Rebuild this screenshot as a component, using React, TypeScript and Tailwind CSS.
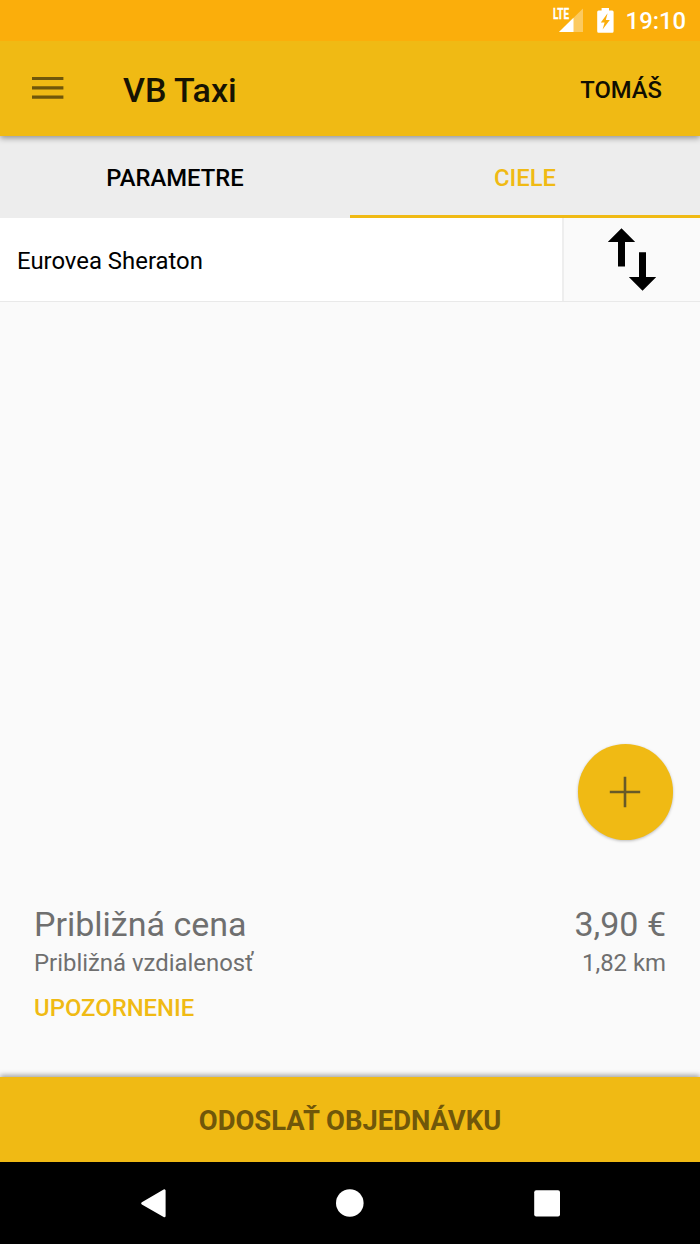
import React from 'react';

const StatusBar = () => (
  <div className="relative z-20 flex h-[41px] items-center justify-end bg-[#fbae0b] pr-[14px] text-white">
    <svg className="mr-[14px] h-[41px] w-[31px]" viewBox="552 0 31 41" aria-hidden="true">
      <path d="M559 32L583 8.5V32Z" fill="#fff" fillOpacity="0.35" />
      <path d="M559 32L573.5 17.8V32Z" fill="#fff" />
      <path d="M552 6H569.5V20.5H552Z" fill="#fbae0b" />
      <text
        x="553"
        y="19"
        fill="#fff"
        stroke="#fff"
        strokeWidth="0.3"
        fontSize="14.5"
        fontWeight="700"
        textLength="16"
        lengthAdjust="spacingAndGlyphs"
      >
        LTE
      </text>
    </svg>
    <svg className="mr-[12px] h-[41px] w-[17px]" viewBox="597 0 17 41" aria-hidden="true">
      <path
        d="M601.6 8H609V10.5H612.2Q613.6 10.5 613.6 12V31.3Q613.6 32.8 612.2 32.8H598.6Q597.2 32.8 597.2 31.3V12Q597.2 10.5 598.6 10.5H601.6Z"
        fill="#fff"
      />
      <path d="M607.6 13.2L600.8 22.4H604.6L602.6 29.6L609.8 19.9H605.8Z" fill="#fbae0b" />
    </svg>
    <span className="relative top-[1px] text-[23.8px] leading-none font-medium">19:10</span>
  </div>
);

const Toolbar = () => (
  <header className="relative z-10 flex h-[95px] items-center bg-[#f0ba14] pr-[38px] pl-8 shadow-[0_2px_6px_rgba(0,0,0,0.4)]">
    <button className="w-[91px]" aria-label="Menu">
      <svg className="h-[24px] w-[32px]" viewBox="0 0 32 24" aria-hidden="true" fill="#70570a">
        <path d="M0 0H31.4V3.1H0ZM0 9.3H31.4V12.4H0ZM0 18.6H31.4V21.7H0Z" />
      </svg>
    </button>
    <h1 className="flex-1 pt-[2px] text-[34px] leading-none font-medium text-[#171302]">VB Taxi</h1>
    <span className="pt-[4px] text-[23.8px] leading-none font-medium text-[#110e02]">TOMÁŠ</span>
  </header>
);

const Tabs = () => (
  <nav className="grid h-[82px] grid-cols-2 bg-[#ededed] text-[23.8px] leading-none font-medium">
    <button className="border-b-[3px] border-transparent pt-[6px] text-black">PARAMETRE</button>
    <button className="border-b-[3px] border-[#f0ba14] pt-[6px] text-[#f0ba14]">CIELE</button>
  </nav>
);

const Destination = () => (
  <div className="flex h-[84px] border-b border-[#e9e9e9]">
    <div className="flex flex-1 items-center bg-white pt-[5px] pl-[17px] text-[23.9px] leading-none text-black">
      Eurovea Sheraton
    </div>
    <button
      className="flex w-[138px] items-center justify-center border-l-2 border-[#eeeeee]"
      aria-label="Swap"
    >
      <svg className="h-[63px] w-[48px]" viewBox="0 0 48 63" aria-hidden="true">
        <path d="M13.5 0.3L27.2 14H17V38.5H10V14H-0.2Z" />
        <path d="M34.5 62.8L48.2 49.1H38V24.2H31V49.1H20.8Z" />
      </svg>
    </button>
  </div>
);

const Summary = () => (
  <section className="flex h-[209px] flex-col pt-[36px] pr-[34px] pl-[34px] text-[#6f6f6f]">
    <div className="flex justify-between text-[34px] leading-10">
      <span>Približná cena</span>
      <span>3,90 €</span>
    </div>
    <div className="flex justify-between pt-[3px] text-[23.9px] leading-8">
      <span>Približná vzdialenosť</span>
      <span>1,82 km</span>
    </div>
    <button className="self-start pt-[13px] text-[23.9px] leading-8 font-medium text-[#f0ba14]">
      UPOZORNENIE
    </button>
  </section>
);

const NavigationBar = () => (
  <div className="flex h-[82px] items-center bg-black pl-[140px]">
    <svg className="h-[30px] w-[420px]" viewBox="140 1188 420 30" aria-hidden="true" fill="#fff">
      <path
        d="M142.5 1203.3L164.3 1190.6V1216Z"
        stroke="#fff"
        strokeWidth="2.6"
        strokeLinejoin="round"
      />
      <circle cx="349.8" cy="1203" r="13.8" />
      <rect x="534.2" y="1190.3" width="25.8" height="26.3" rx="2" />
    </svg>
  </div>
);

const App = () => {
  return (
    <div className="flex h-[1244px] w-[700px] flex-col overflow-hidden bg-[#fafafa] font-[Roboto,sans-serif]">
      <StatusBar />
      <Toolbar />
      <Tabs />
      <Destination />
      <main className="flex flex-1 items-end justify-end pr-[27px] pb-[28px]">
        <button
          className="flex size-[95.5px] items-center justify-center rounded-full bg-[#f0ba14] shadow-[0_1px_3px_rgba(0,0,0,0.25)]"
          aria-label="Add"
        >
          <svg className="size-[32px]" viewBox="0 0 32 32" aria-hidden="true">
            <path d="M16 0.8V31.2M0.8 16H31.2" stroke="#685a28" strokeWidth="2.6" />
          </svg>
        </button>
      </main>
      <Summary />
      <button className="relative h-[85.5px] shrink-0 bg-[#f0ba14] pt-[5px] text-[27.4px] leading-none font-bold text-[#70570a] shadow-[0_-2px_5px_rgba(0,0,0,0.35)]">
        ODOSLAŤ OBJEDNÁVKU
      </button>
      <NavigationBar />
    </div>
  );
};

export default App;
